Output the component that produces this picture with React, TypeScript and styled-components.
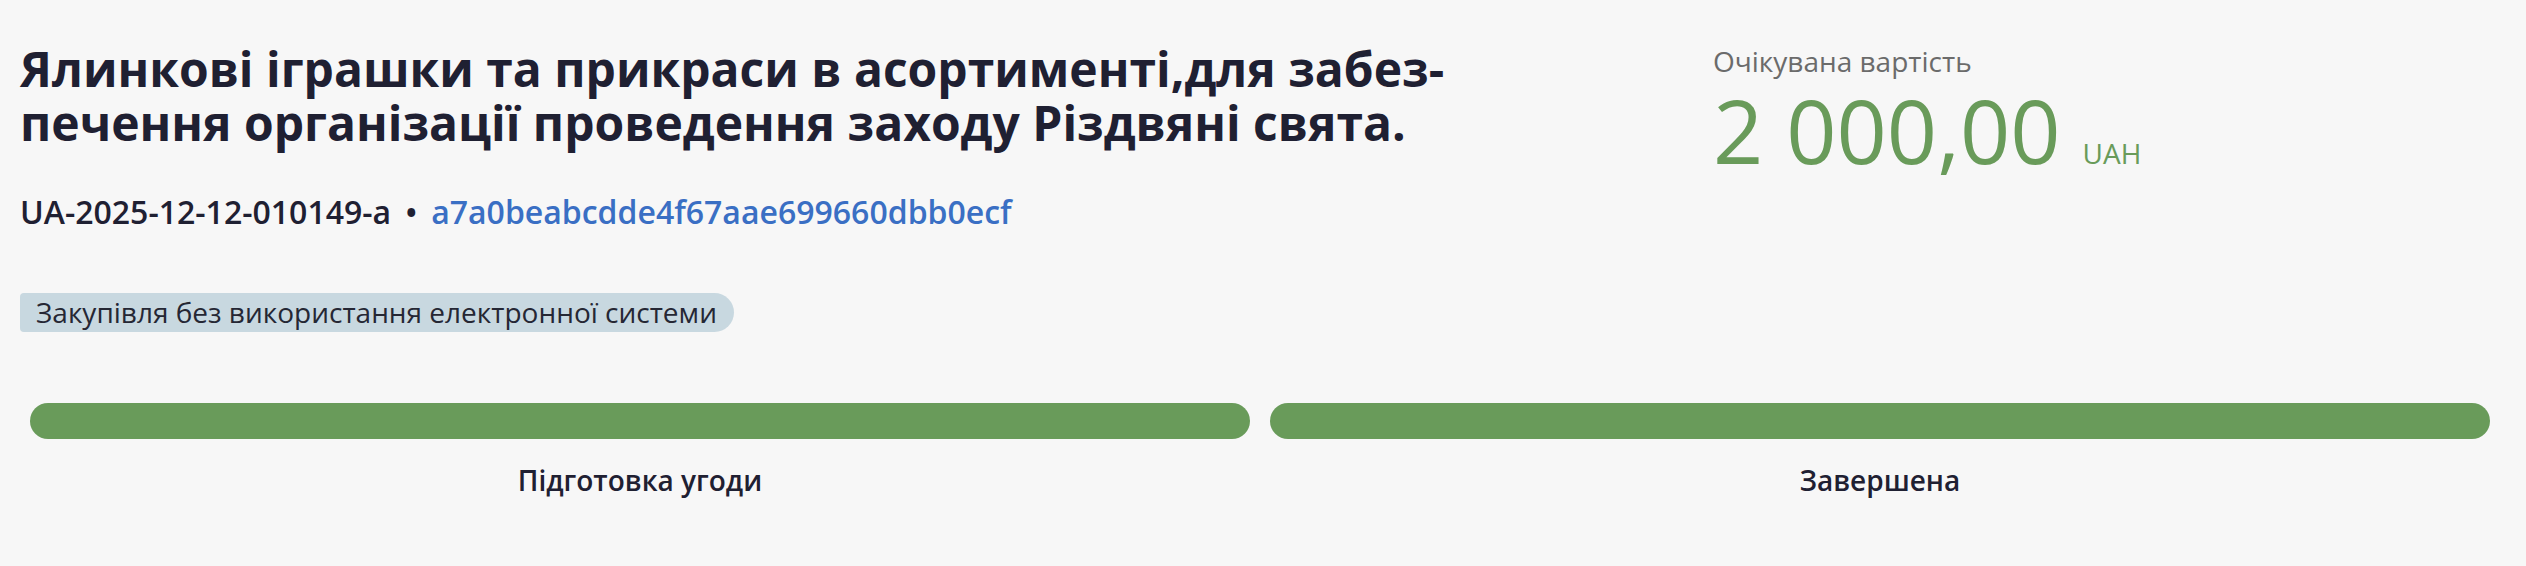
import React from 'react'
import styled, { createGlobalStyle } from 'styled-components'

const GlobalStyle = createGlobalStyle`
  html, body {
    margin: 0;
    padding: 0;
    background: #f7f7f7;
  }
  body {
    font-family: 'Open Sans', 'Noto Sans', sans-serif;
    color: #1f2032;
  }
`

const Page = styled.div`
  padding: 42px 26px 40px 20px;
  min-height: 566px;
  box-sizing: border-box;
`

const Header = styled.div`
  display: grid;
  grid-template-columns: 1fr 787px;
`

const Main = styled.div`
  display: flex;
  flex-direction: column;
  align-items: flex-start;
`

const Title = styled.h1`
  margin: 0;
  max-width: 1500px;
  font-size: 48px;
  line-height: 54px;
  font-weight: 700;
  color: #1f2032;
`

const IdRow = styled.div`
  margin-top: 40px;
  display: flex;
  align-items: baseline;
  gap: 14px;
  font-size: 32px;
  line-height: 43px;
  font-weight: 600;
`

const Dot = styled.span`
  color: #1f2032;
`

const Link = styled.a`
  color: #3a6fc4;
  text-decoration: none;
`

const Tag = styled.span`
  margin-top: 60px;
  display: inline-block;
  padding: 0 17px 0 16px;
  background: #c8d8e0;
  border-radius: 4px 20px 20px 4px;
  font-size: 28px;
  line-height: 39px;
  color: #252734;
`

const Price = styled.div`
  display: flex;
  flex-direction: column;
`

const PriceLabel = styled.div`
  font-size: 28px;
  line-height: 39px;
  color: #6b6b6b;
`

const PriceValue = styled.div`
  margin-top: 3px;
  display: flex;
  align-items: baseline;
  gap: 22px;
  color: #699b5a;
`

const Amount = styled.span`
  font-size: 88px;
  line-height: 93px;
  font-weight: 400;
`

const Currency = styled.span`
  font-size: 28px;
  font-weight: 400;
`

const Steps = styled.div`
  margin-top: 71px;
  display: grid;
  grid-template-columns: repeat(2, 1fr);
`

const Step = styled.div`
  display: flex;
  flex-direction: column;
  align-items: center;
  padding: 0 10px;
`

const Bar = styled.div<{ $done?: boolean }>`
  width: 100%;
  height: 36px;
  border-radius: 18px;
  background: ${p => (p.$done ? '#699b5a' : '#d9d9d9')};
`

const StepLabel = styled.div`
  margin-top: 22px;
  font-size: 28px;
  line-height: 39px;
  font-weight: 600;
  color: #1f2032;
`

const steps = [
  { name: 'Підготовка угоди', done: true },
  { name: 'Завершена', done: true },
]

export default function App() {
  return (
    <>
      <GlobalStyle />
      <Page>
        <Header>
          <Main>
            <Title>
              Ялинкові іграшки та прикраси в асортименті,для забез{'\u00AD'}печення організації проведення заходу Різдвяні свята.
            </Title>
            <IdRow>
              <span>UA-2025-12-12-010149-a</span>
              <Dot>•</Dot>
              <Link href="#">a7a0beabcdde4f67aae699660dbb0ecf</Link>
            </IdRow>
            <Tag>Закупівля без використання електронної системи</Tag>
          </Main>
          <Price>
            <PriceLabel>Очікувана вартість</PriceLabel>
            <PriceValue>
              <Amount>2 000,00</Amount>
              <Currency>UAH</Currency>
            </PriceValue>
          </Price>
        </Header>
        <Steps>
          {steps.map(s => (
            <Step key={s.name}>
              <Bar $done={s.done} />
              <StepLabel>{s.name}</StepLabel>
            </Step>
          ))}
        </Steps>
      </Page>
    </>
  )
}
